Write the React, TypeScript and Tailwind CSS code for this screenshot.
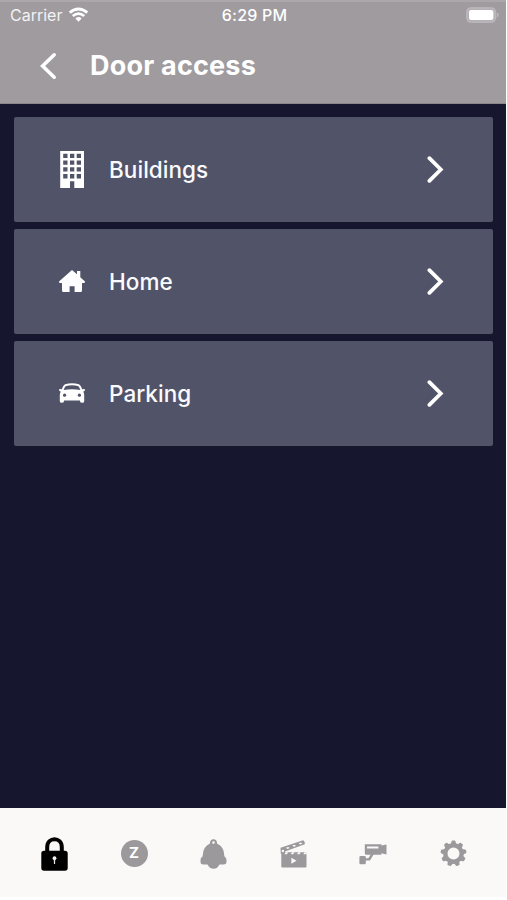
import type { ReactNode } from "react";

function Wifi() {
  return (
    <svg className="h-[16px] w-[21px]" viewBox="0 0 22 16" fill="none" stroke="#fff">
      <path d="M1.8 5.6Q11 -2.2 20.2 5.6" strokeWidth="3" />
      <path d="M5 9Q11 4 17 9" strokeWidth="2.8" />
      <path d="M7.7 11.6Q11 8.6 14.3 11.6L11 15Z" fill="#fff" stroke="none" />
    </svg>
  );
}

function Battery() {
  return (
    <svg className="h-[16px] w-[33px]" viewBox="0 0 33 16">
      <rect x="0.8" y="0.8" width="28.6" height="14.4" rx="4.2" fill="#b3afb4" stroke="#bdb9be" strokeWidth="1.3" />
      <rect x="3" y="3" width="24.4" height="10" rx="2" fill="#fff" />
      <path d="M30.7 5.3Q32.6 6 32.6 8T30.7 10.7Z" fill="#bdb9be" />
    </svg>
  );
}

function Building() {
  return (
    <svg className="h-[37px] w-[26px]" viewBox="0 0 26 37" fill="#fff">
      <path
        fillRule="evenodd"
        d="M1.2 0H25V37H15.3V30.2H11V37H1.2ZM4.2 2.7V7H8.5V2.7ZM11 2.7V7H15.3V2.7ZM17.7 2.7V7H22V2.7ZM4.2 9.5V13.8H8.5V9.5ZM11 9.5V13.8H15.3V9.5ZM17.7 9.5V13.8H22V9.5ZM4.2 16.3V20.6H8.5V16.3ZM11 16.3V20.6H15.3V16.3ZM17.7 16.3V20.6H22V16.3ZM4.2 23.1V27.4H8.5V23.1ZM11 23.1V27.4H15.3V23.1ZM17.7 23.1V27.4H22V23.1Z"
      />
    </svg>
  );
}

function House() {
  return (
    <svg className="h-[22px] w-[26px]" viewBox="0 0 26 22" fill="#fff">
      <path d="M13 0L18 4.2V1H21.3V7.2L26 11.6Q26.2 13.2 24.5 13H23V20.5Q23 22 21.5 22H15.6V16.2H10.6V22H4.6Q3 22 3 20.5V13H1.5Q-.2 13.2 0 11.6Z" />
    </svg>
  );
}

function Car() {
  return (
    <svg className="h-[20px] w-[26px]" viewBox="0 0 26 20" fill="#fff">
      <path
        fillRule="evenodd"
        d="M6 1.2Q13 -.7 20 1.2Q21.8 2 23.3 6.3L25.6 6.1Q26.5 7.3 25.2 8.2L24.2 8.5Q25.2 10 25.2 12.2V18.2Q25.2 19.8 23.2 19.8Q21.2 19.8 21 18.2V17.4H5V18.2Q4.8 19.8 2.8 19.8Q.8 19.8 .8 18.2V12.2Q.8 10 1.8 8.5L.8 8.2Q-.5 7.3 .4 6.1L2.7 6.3Q4.2 2 6 1.2ZM7 3Q5.5 4 4.7 7.1Q13 5.4 21.3 7.1Q20.5 4 19 3Q13 1.5 7 3Z"
      />
      <circle cx="5.6" cy="12.2" r="1.6" fill="#515468" />
      <circle cx="20.4" cy="12.2" r="1.6" fill="#515468" />
    </svg>
  );
}

function Lock() {
  return (
    <svg className="h-[34px] w-[27px]" viewBox="0 0 27 34">
      <path d="M6.2 17V10.2C6.2 -.4 20.8 -.4 20.8 10.2V17" fill="none" stroke="#000" strokeWidth="4" />
      <rect x=".3" y="13.8" width="26.4" height="20" rx="2.8" />
      <circle cx="13.5" cy="21.2" r="1.9" fill="#f5f5f5" />
      <path d="M12.8 22H14.2L14.1 27H12.9Z" fill="#e5e5e5" />
    </svg>
  );
}

function Bell() {
  return (
    <svg className="h-[30px] w-[27px]" viewBox="0 0 27 30" fill="#9c999c">
      <path
        fillRule="evenodd"
        d="M13.5 .2A3.5 3.5 0 0 1 17 4.4Q24.2 7.8 24.2 16L24.5 17.6Q26.7 18.8 26.5 21.6V23Q26.4 25.5 23.5 25.5H19.5Q17.5 29.7 13.5 29.7Q9.5 29.7 7.5 25.5H3.5Q.6 25.5 .5 23V21.6Q.3 18.8 2.5 17.6L2.8 16Q2.8 7.8 10 4.4A3.5 3.5 0 0 1 13.5 .2ZM13.5 2.3A1.3 1.3 0 1 0 13.5 4.9A1.3 1.3 0 1 0 13.5 2.3Z"
      />
    </svg>
  );
}

function Clapper() {
  return (
    <svg className="h-[28px] w-[27px]" viewBox="0 0 27 28" fill="#9c999c">
      <rect x="1.3" y="12.3" width="25.2" height="15.2" rx="1" />
      <path d="M.5 7.8L23.2 .3Q25.4 2 24.8 4.2L5 11.4V13.8H.8Z" />
      <g fill="#faf9f8">
        <path d="M5.8 7.7L8.2 6.9L9.8 8.1L7.4 8.9ZM12.2 5.5L14.6 4.7L16.2 5.9L13.8 6.7ZM18.6 3.3L21 2.5L22.4 3.7L20.1 4.5Z" />
        <path d="M5.6 12.3H8.1L7 14.3H4.5ZM11.9 12.3H14.4L13.3 14.3H10.8ZM18.2 12.3H20.7L19.6 14.3H17.1ZM24.4 12.3H26.5V14.3H23.4Z" />
        <circle cx="2.9" cy="11" r="1.2" />
        <path d="M11.4 17.8L16.5 20.8L11.4 23.8Z" />
      </g>
    </svg>
  );
}

function Camera() {
  return (
    <svg className="h-[22px] w-[28px]" viewBox="0 0 28 22" fill="#9c999c">
      <path
        fillRule="evenodd"
        d="M5.8 1.2H22.4V2.6L27.5 1.4V11.4L22.4 10.2V11.8H14.5L11 17.6H6.8V19.9Q6.8 21.2 5.5 21.2H1.4Q.4 21.2 .4 20.2V14.2Q.4 13.1 1.5 13.1H5.5Q6.8 13.1 6.8 14.3V15.3H9.4L11.6 11.8H7.4Q5.8 11.8 5.8 10.2ZM8 3.4V5.4H19.4V3.4Z"
      />
    </svg>
  );
}

function Gear() {
  return (
    <svg className="h-[27px] w-[27px]" viewBox="-13.5 -13.5 27 27" fill="#9c999c">
      {[0, 40, 80, 120, 160, 200, 240, 280, 320].map((angle) => (
        <path key={angle} transform={`rotate(${angle})`} d="M-2.8 -9L-2 -12.1Q-1.8 -12.9 -1 -12.9H1Q1.8 -12.9 2 -12.1L2.8 -9Z" />
      ))}
      <circle r="8.2" fill="none" stroke="#9c999c" strokeWidth="4.4" />
    </svg>
  );
}

function Row({ icon, label }: { icon: ReactNode; label: string }) {
  return (
    <button className="flex h-[105px] w-full items-center rounded-[2px] bg-[#515468] pr-[49px] pb-px pl-[45px] text-left text-[#fbfbff]">
      <span className="flex w-[26px] justify-center">{icon}</span>
      <span className="ml-[24px] flex-1 pt-px text-[22.5px] leading-7 font-medium tracking-[0.05px]">{label}</span>
      <svg className="h-[28px] w-[18px]" viewBox="0 0 18 28" fill="none" stroke="#fff" strokeWidth="3.8">
        <path d="M3.4 3.2L14.8 14.5L3.4 25.8" strokeLinecap="round" />
      </svg>
    </button>
  );
}

export default function App() {
  return (
    <div className="flex h-[900px] w-[507px] flex-col bg-white pr-px font-['Inter','Liberation_Sans',sans-serif]">
      <header className="h-[104px] border-t-2 border-b border-t-[#aba8ac] border-b-[#8b888d] bg-[#9f9b9f] text-white">
        <div className="grid h-[26px] grid-cols-3 items-center pr-[7px] pl-[10px] text-[16px]">
          <div className="flex items-center gap-[6px] text-[#f4f2f4]">
            <span>Carrier</span>
            <Wifi />
          </div>
          <span className="text-center font-medium tracking-[0.2px]">6:29 PM</span>
          <span className="flex justify-end"><Battery /></span>
        </div>
        <div className="flex h-[76px] items-center pb-[1px] pl-[38px]">
          <svg className="h-[28px] w-[20px]" viewBox="0 0 20 28" fill="none" stroke="#fff" strokeWidth="3.6">
            <path d="M16.2 2.8L4.6 14L16.2 25.2" strokeLinecap="round" />
          </svg>
          <h1 className="ml-[32px] text-[27px] leading-8 font-bold tracking-[0.2px]">Door access</h1>
        </div>
      </header>
      <main className="flex flex-1 flex-col gap-[7px] bg-[#16172f] pt-[13px] pr-[13px] pl-[14px]">
        <Row icon={<Building />} label="Buildings" />
        <Row icon={<House />} label="Home" />
        <Row icon={<Car />} label="Parking" />
      </main>
      <nav className="mb-[3px] flex h-[89px] items-center justify-between bg-[#faf9f8] pt-[3px] pr-[39px] pb-[1px] pl-[41px]">
        <Lock />
        <span className="flex size-[27px] items-center justify-center rounded-full bg-[#9c999c] text-[15px] font-bold text-white">Z</span>
        <Bell />
        <Clapper />
        <Camera />
        <Gear />
      </nav>
    </div>
  );
}
